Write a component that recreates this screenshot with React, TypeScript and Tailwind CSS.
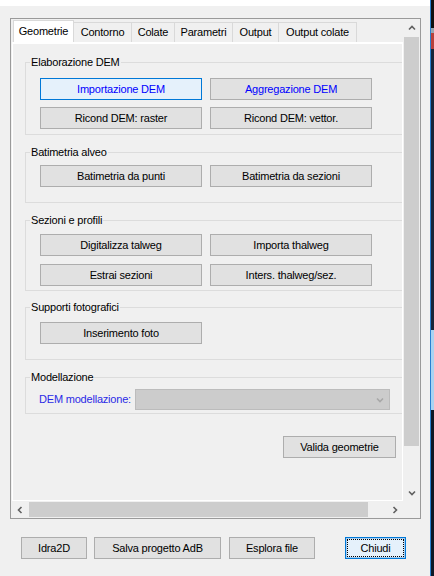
import React from 'react';

type BtnProps = {
  label: string;
  width: string;
  blue?: boolean;
  focused?: boolean;
  isDefault?: boolean;
  className?: string;
};

function WinButton({ label, width, blue, focused, isDefault, className }: BtnProps) {
  const look = isDefault
    ? 'border-[#0078d7] bg-[#e5f1fb] shadow-[inset_0_0_0_1px_#a6cdf0] outline-1 outline-dotted outline-black -outline-offset-3'
    : focused
      ? 'border-[#0078d7] bg-[#e5f1fb]'
      : 'border-[#adadad] bg-[#e1e1e1]';
  return (
    <div
      className={`flex h-[22px] shrink-0 items-center justify-center border leading-[13px] ${width} ${look} ${
        blue ? 'text-[#0000ff]' : 'text-black'
      } ${className ?? ''}`}
    >
      {label}
    </div>
  );
}

function Chevron({ dir, color = '#606060' }: { dir: 'up' | 'down' | 'left' | 'right'; color?: string }) {
  const pts = {
    up: '1,5.5 4,2.5 7,5.5',
    down: '1,2.5 4,5.5 7,2.5',
    left: '5.5,1 2.5,4 5.5,7',
    right: '2.5,1 5.5,4 2.5,7',
  }[dir];
  return (
    <svg width="8" height="8" viewBox="0 0 8 8">
      <polyline points={pts} fill="none" stroke={color} strokeWidth="1.6" />
    </svg>
  );
}

type GroupProps = {
  title: string;
  height: string;
  top: string;
  children: React.ReactNode;
};

function Group({ title, height, top, children }: GroupProps) {
  return (
    <fieldset className={`block w-[400px] border border-[#dcdcdc] ${height} ${top}`}>
      <legend className="ml-[4px] px-[1px] leading-[13px]">{title}</legend>
      {children}
    </fieldset>
  );
}

const tabs = [
  { label: 'Contorno', width: 'w-[58px]' },
  { label: 'Colate', width: 'w-[43px]' },
  { label: 'Parametri', width: 'w-[58px]' },
  { label: 'Output', width: 'w-[46px]' },
  { label: 'Output colate', width: 'w-[78px]' },
];

export default function App() {
  return (
    <div className="flex h-[576px] w-[434px] overflow-hidden font-['Liberation_Sans',Arial,sans-serif] text-[11px] tracking-[-0.2px] text-black">
      <div className="flex w-[430px] flex-col bg-[#f0f0f0]">
        <div className="h-[6px] bg-white" />

        {/* scrollable panel */}
        <div className="ml-[10px] mt-[12px] grid h-[501px] w-[411px] grid-cols-[392px_17px] grid-rows-[482px_17px] border border-[#9a9a9a]">
          <div className="flex flex-col overflow-hidden pl-[1px] pt-[1px]">
            {/* tab headers */}
            <div className="flex h-[22px] items-end pl-[1px]">
              <div className="flex h-[22px] w-[61px] items-center justify-center border-x border-t border-[#d9d9d9] bg-white pb-[1px]">
                Geometrie
              </div>
              {tabs.map((t) => (
                <div
                  key={t.label}
                  className={`flex h-[20px] items-center justify-center border-r border-t border-[#d9d9d9] bg-[#f0f0f0] ${t.width}`}
                >
                  {t.label}
                </div>
              ))}
            </div>

            {/* tab page */}
            <div className="flex-1 overflow-hidden border-x border-b border-t-2 border-white pl-[12px]">
              <Group title="Elaborazione DEM" height="h-[79px]" top="mt-[12px]">
                <div className="mt-[9px] flex flex-col gap-[7px] pl-[14px]">
                  <div className="flex gap-[8px]">
                    <WinButton label="Importazione DEM" width="w-[162px]" blue focused />
                    <WinButton label="Aggregazione DEM" width="w-[162px]" blue />
                  </div>
                  <div className="flex gap-[8px]">
                    <WinButton label="Ricond DEM: raster" width="w-[162px]" />
                    <WinButton label="Ricond DEM: vettor." width="w-[162px]" />
                  </div>
                </div>
              </Group>

              <Group title="Batimetria alveo" height="h-[57px]" top="mt-[11px]">
                <div className="mt-[6px] flex gap-[8px] pl-[14px]">
                  <WinButton label="Batimetria da punti" width="w-[162px]" />
                  <WinButton label="Batimetria da sezioni" width="w-[162px]" />
                </div>
              </Group>

              <Group title="Sezioni e profili" height="h-[77px]" top="mt-[11px]">
                <div className="mt-[7px] flex flex-col gap-[8px] pl-[14px]">
                  <div className="flex gap-[8px]">
                    <WinButton label="Digitalizza talweg" width="w-[162px]" />
                    <WinButton label="Importa thalweg" width="w-[162px]" />
                  </div>
                  <div className="flex gap-[8px]">
                    <WinButton label="Estrai sezioni" width="w-[162px]" />
                    <WinButton label="Inters. thalweg/sez." width="w-[162px]" />
                  </div>
                </div>
              </Group>

              <Group title="Supporti fotografici" height="h-[59px]" top="mt-[10px]">
                <div className="mt-[8px] flex pl-[14px]">
                  <WinButton label="Inserimento foto" width="w-[162px]" />
                </div>
              </Group>

              <Group title="Modellazione" height="h-[43px]" top="mt-[11px]">
                <div className="mt-[5px] flex items-center pl-[13px]">
                  <span className="w-[96px] leading-[13px] text-[#2a2ae6]">DEM modellazione:</span>
                  <div className="flex h-[21px] w-[255px] items-center justify-end border border-[#bcbcbc] bg-[#cccccc] pr-[5px]">
                    <Chevron dir="down" color="#a8a8a8" />
                  </div>
                </div>
              </Group>

              <WinButton label="Valida geometrie" width="w-[113px]" className="ml-[258px] mt-[22px]" />
            </div>
          </div>

          {/* vertical scrollbar */}
          <div className="flex flex-col bg-[#f0f0f0]">
            <div className="flex h-[17px] items-center justify-center">
              <Chevron dir="up" />
            </div>
            <div className="mx-[1px] mt-[1px] h-[409px] bg-[#cdcdcd]" />
            <div className="flex-1" />
            <div className="flex h-[17px] items-center justify-center">
              <Chevron dir="down" />
            </div>
          </div>

          {/* horizontal scrollbar */}
          <div className="flex bg-[#f0f0f0]">
            <div className="flex w-[17px] items-center justify-center">
              <Chevron dir="left" />
            </div>
            <div className="my-[1px] ml-[1px] w-[339px] bg-[#cdcdcd]" />
            <div className="flex-1" />
            <div className="flex w-[17px] items-center justify-center">
              <Chevron dir="right" />
            </div>
          </div>
          <div className="bg-[#f0f0f0]" />
        </div>

        {/* footer buttons */}
        <div className="mt-[18px] flex">
          <WinButton label="Idra2D" width="w-[66px]" className="ml-[21px]" />
          <WinButton label="Salva progetto AdB" width="w-[127px]" className="ml-[7px]" />
          <WinButton label="Esplora file" width="w-[86px]" className="ml-[8px]" />
          <WinButton label="Chiudi" width="w-[61px]" className="ml-[30px]" isDefault />
        </div>
      </div>

      {/* edge of the window behind */}
      <div className="flex w-[4px] border-l border-[#2a7fd0]">
        <div className="flex flex-1 flex-col">
          <div className="h-[28px] bg-[#101010]" />
          <div className="h-[5px] bg-[#9aa6b2]" />
          <div className="h-[16px] bg-[#b8403c]" />
          <div className="h-[281px] bg-[#17263a]" />
          <div className="h-[80px] bg-[#a9d3f2]" />
          <div className="flex-1 bg-[#0e1826]" />
        </div>
      </div>
    </div>
  );
}
